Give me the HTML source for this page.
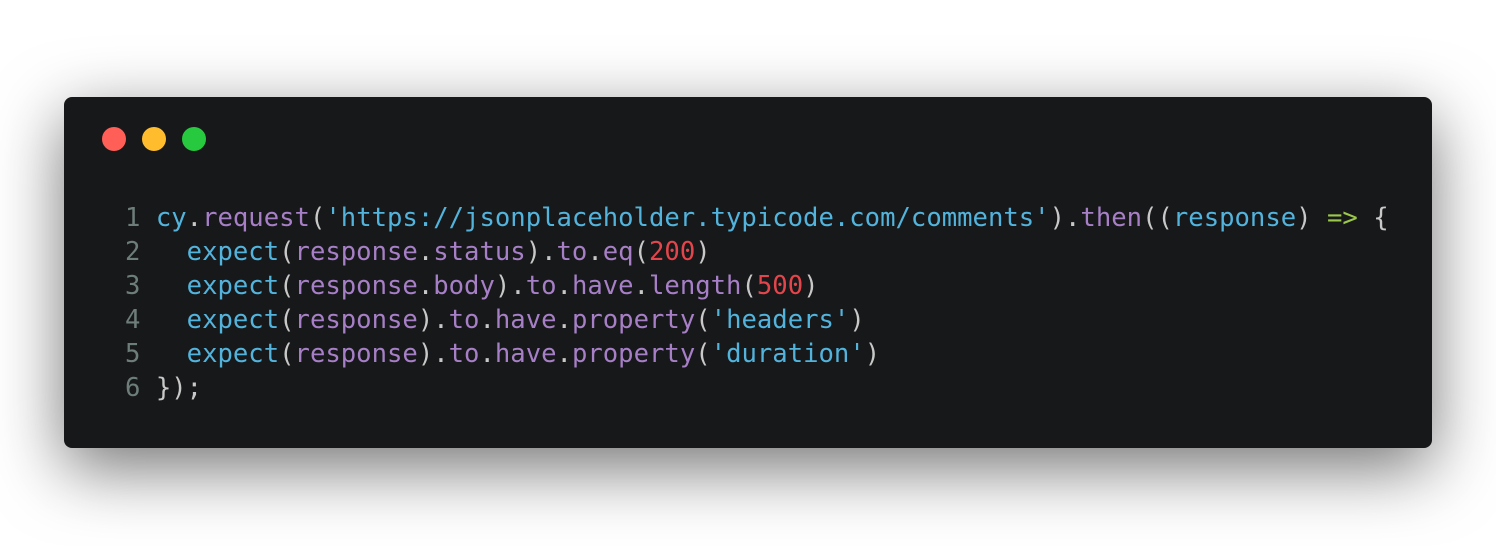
<!DOCTYPE html>
<html><head><style>
html,body{margin:0;padding:0;width:1496px;height:546px;background:#fff;overflow:hidden}
.win{position:absolute;left:64px;top:97px;width:1368px;height:351px;background:#171819;border-radius:8px;box-shadow:0 20px 68px rgba(0,0,0,0.55)}
.dot{position:absolute;top:30px;width:24px;height:24px;border-radius:50%}
pre{position:absolute;left:61px;top:104px;margin:0;font-family:"DejaVu Sans Mono","Liberation Mono",monospace;font-size:25.6px;line-height:34px;color:#c8c8c8}
.n{color:#6d7d7a}.c{color:#52b3dc}.p{color:#a67fc6}.r{color:#e2464c}.g{color:#9bc84a}
</style></head><body>
<div class="win">
<div class="dot" style="left:38px;background:#ff5f56"></div>
<div class="dot" style="left:78px;background:#ffbd2e"></div>
<div class="dot" style="left:118px;background:#27c93f"></div>
<pre><span class="n">1 </span><span class="c">cy</span>.<span class="p">request</span>(<span class="c">'https://jsonplaceholder.typicode.com/comments'</span>).<span class="p">then</span>((<span class="c">response</span>) <span class="g">=&gt;</span> {
<span class="n">2 </span>  <span class="c">expect</span>(<span class="p">response</span>.<span class="p">status</span>).<span class="p">to</span>.<span class="p">eq</span>(<span class="r">200</span>)
<span class="n">3 </span>  <span class="c">expect</span>(<span class="p">response</span>.<span class="p">body</span>).<span class="p">to</span>.<span class="p">have</span>.<span class="p">length</span>(<span class="r">500</span>)
<span class="n">4 </span>  <span class="c">expect</span>(<span class="p">response</span>).<span class="p">to</span>.<span class="p">have</span>.<span class="p">property</span>(<span class="c">'headers'</span>)
<span class="n">5 </span>  <span class="c">expect</span>(<span class="p">response</span>).<span class="p">to</span>.<span class="p">have</span>.<span class="p">property</span>(<span class="c">'duration'</span>)
<span class="n">6 </span>});</pre>
</div>
</body></html>
